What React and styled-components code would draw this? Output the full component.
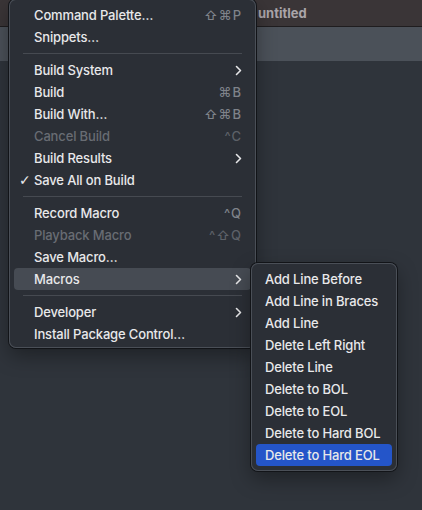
import styled, { createGlobalStyle } from "styled-components";

const GlobalStyle = createGlobalStyle`
  html, body {
    margin: 0;
    padding: 0;
    background: #2f343b;
  }
  body {
    font-family: Inter, "Noto Sans", "DejaVu Sans", sans-serif;
    -webkit-font-smoothing: antialiased;
  }
`;

const mainItems = [
  { label: "Command Palette…", keys: "⇧⌘P" },
  { label: "Snippets…" },
  { sep: true },
  { label: "Build System", sub: true },
  { label: "Build", keys: "⌘B" },
  { label: "Build With…", keys: "⇧⌘B" },
  { label: "Cancel Build", keys: "^C", disabled: true },
  { label: "Build Results", sub: true },
  { label: "Save All on Build", checked: true },
  { sep: true },
  { label: "Record Macro", keys: "^Q" },
  { label: "Playback Macro", keys: "^⇧Q", disabled: true },
  { label: "Save Macro…" },
  { label: "Macros", sub: true, active: true },
  { sep: true },
  { label: "Developer", sub: true },
  { label: "Install Package Control…" },
];

const macroItems = [
  "Add Line Before",
  "Add Line in Braces",
  "Add Line",
  "Delete Left Right",
  "Delete Line",
  "Delete to BOL",
  "Delete to EOL",
  "Delete to Hard BOL",
  "Delete to Hard EOL",
];

export default function App() {
  return (
    <>
      <GlobalStyle />
      <Window>
        <TitleBar>
          <Title>untitled</Title>
        </TitleBar>
        <TabBar />
        <Editor />

        <MainMenu>
          {mainItems.map((item, i) =>
            item.sep ? (
              <Separator key={i} />
            ) : (
              <Row key={i} $active={item.active} $disabled={item.disabled}>
                <Check>{item.checked ? "✓" : ""}</Check>
                <Label>{item.label}</Label>
                {item.keys && <Keys $disabled={item.disabled}>{item.keys}</Keys>}
                {item.sub && <Chevron />}
              </Row>
            )
          )}
        </MainMenu>

        <SubMenu>
          {macroItems.map((label, i) => (
            <SubRow key={label} $selected={i === macroItems.length - 1}>
              {label}
            </SubRow>
          ))}
        </SubMenu>
      </Window>
    </>
  );
}

function Chevron() {
  return (
    <ChevronIcon width="7" height="11" viewBox="0 0 7 11">
      <path
        d="M1.5 1.5 L5.5 5.5 L1.5 9.5"
        fill="none"
        stroke="#e6e6e8"
        strokeWidth="1.6"
        strokeLinecap="round"
        strokeLinejoin="round"
      />
    </ChevronIcon>
  );
}

const Window = styled.div`
  position: relative;
  width: 422px;
  height: 510px;
  overflow: hidden;
  display: flex;
  flex-direction: column;
`;

const TitleBar = styled.div`
  height: 27px;
  background: #3a3537;
  border-bottom: 1px solid #1f1d1f;
  display: flex;
  align-items: center;
  padding-left: 258px;
  box-sizing: border-box;
`;

const Title = styled.span`
  font-size: 13px;
  font-weight: 700;
  color: #aaa5a9;
`;

const TabBar = styled.div`
  height: 34px;
  background: #4b5159;
`;

const Editor = styled.div`
  flex: 1;
  background: #2f343b;
`;

const MenuBox = styled.div`
  position: absolute;
  box-sizing: border-box;
  background: #2b2f36;
  border-radius: 7px;
  box-shadow: 0 0 0 1px #121418, inset 0 0 0 1px #4a4f57,
    0 8px 20px rgba(0, 0, 0, 0.35);
  padding: 5px;
`;

const MainMenu = styled(MenuBox)`
  left: 9px;
  top: -1px;
  width: 247px;
  height: 349px;
`;

const SubMenu = styled(MenuBox)`
  left: 251px;
  top: 263px;
  width: 146px;
  height: 208px;
`;

const Row = styled.div`
  height: 22px;
  display: flex;
  align-items: center;
  border-radius: 4px;
  padding-right: 9px;
  font-size: 13px;
  font-weight: 500;
  letter-spacing: -0.15px;
  color: ${(p) => (p.$disabled ? "#686c73" : "#e8e8ea")};
  background: ${(p) => (p.$active ? "#464b53" : "transparent")};
`;

const Check = styled.span`
  width: 20px;
  padding-left: 5px;
  box-sizing: border-box;
  font-family: "DejaVu Sans", sans-serif;
  font-size: 14px;
  font-weight: 700;
  color: #e8e8ea;
`;

const Label = styled.span`
  flex: 1;
  white-space: nowrap;
`;

const Keys = styled.span`
  font-size: 13px;
  color: ${(p) => (p.$disabled ? "#5d6168" : "#7f838a")};
  letter-spacing: 1px;
`;

const ChevronIcon = styled.svg`
  display: block;
`;

const Separator = styled.div`
  height: 11px;
  display: flex;
  align-items: center;
  padding: 0 9px;
  &::after {
    content: "";
    flex: 1;
    height: 1px;
    background: #464a51;
  }
`;

const SubRow = styled.div`
  height: 22px;
  display: flex;
  align-items: center;
  padding-left: 9px;
  border-radius: 4px;
  font-size: 13px;
  font-weight: 500;
  letter-spacing: -0.15px;
  white-space: nowrap;
  color: #e8e8ea;
  background: ${(p) => (p.$selected ? "#2455c9" : "transparent")};
`;
